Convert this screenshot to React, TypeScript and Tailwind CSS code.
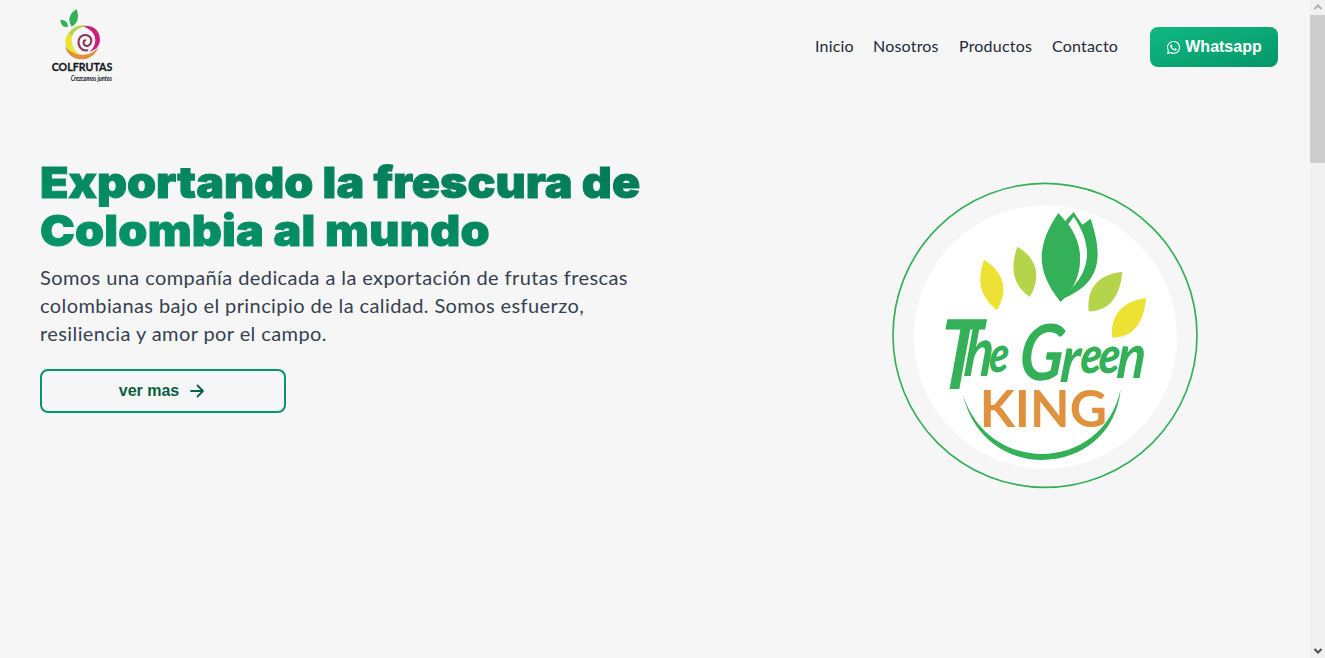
import { FaWhatsapp } from "react-icons/fa";

const links = [
  { label: "Inicio", box: "w-[38px]" },
  { label: "Nosotros", box: "w-[66px]" },
  { label: "Productos", box: "w-[73px]" },
  { label: "Contacto", box: "w-[66px]" },
];

function BrandLogo() {
  return (
    <svg viewBox="0 0 270 285" className="h-[95px] w-[90px] shrink-0 self-start" aria-label="Colfrutas">
      <path d="M110 28C86 40 83 62 95 80C114 71 118 51 110 28Z" fill="#33b058" />
      <path d="M61 59C63 76 70 83 84 80C83 65 76 60 61 59Z" fill="#33b058" />
      <path d="M82 110C90 84 117 69 150 79C124 79 106 87 98 106C94 113 86 115 82 110Z" fill="#b6d44b" />
      <path d="M80 106C68 137 84 161 120 164C103 152 90 135 97 104Z" fill="#ece233" />
      <path d="M75 138C86 190 158 192 176 140C151 173 100 172 75 138Z" fill="#e0913d" />
      <path d="M130 80C156 72 180 90 180 119C179 140 166 149 149 155C176 132 172 92 130 80Z" fill="#c9207c" />
      <path
        d="M142 151C124 154 113 137 116 122C119 105 139 100 150 111C159 121 151 139 139 138C129 136 128 123 136 121"
        fill="none"
        stroke="#8c3658"
        strokeWidth="6"
        strokeLinecap="round"
      />
      <text x="35" y="214" textLength="182" lengthAdjust="spacingAndGlyphs" fontFamily="Lato, sans-serif" fontSize="35" fontWeight="700" fill="#15151d" stroke="#15151d" strokeWidth="0.8">
        COLFRUTAS
      </text>
      <text x="92" y="243" textLength="124" lengthAdjust="spacingAndGlyphs" fontFamily="Lato, sans-serif" fontSize="24" fontStyle="italic" fontWeight="700" fill="#15151d">
        Crezcamos juntos
      </text>
    </svg>
  );
}

function GreenKingLogo() {
  return (
    <svg viewBox="0 0 960 960" className="size-80" aria-label="The Green King">
      <circle cx="480" cy="481" r="456" fill="none" stroke="#33b058" strokeWidth="5" />
      <circle cx="481" cy="486" r="395" fill="#fff" />
      <path d="M541 137L566 111L592 149L617 131C652 238 653 319 541 368L526 380Z" fill="#33b058" />
      <path d="M550 148L566 125C623 208 623 289 541 357C596 286 600 220 550 148Z" fill="#fff" />
      <path d="M520 114C458 205 447 283 526 380C606 309 605 203 520 114Z" fill="#33b058" />
      <path d="M297 254C278 312 279 360 336 405C369 350 362 294 297 254Z" fill="#ece233" />
      <path d="M397 215C377 274 378 325 434 366C467 312 462 253 397 215Z" fill="#b6d44b" />
      <path d="M712 291C640 297 604 340 611 409C671 409 705 367 712 291Z" fill="#b6d44b" />
      <path d="M783 369C711 378 674 423 682 488C742 488 777 446 783 369Z" fill="#ece233" />
      <path
        d="M234 659C262 785 365 855 470 855C590 855 695 775 707 643C680 768 580 837 470 837C370 837 270 775 234 659Z"
        fill="#33b058"
      />
      <g fontFamily="Lato, sans-serif" fontWeight="700" fontStyle="italic" fill="#33b058">
        <text transform="translate(154 642) skewX(-5) scale(0.78 1)" fontSize="290">
          <tspan>T</tspan>
          <tspan x="98" y="-40" fontSize="206">h</tspan>
          <tspan x="194" y="-50" fontSize="152" fontWeight="900">e</tspan>
        </text>
        <text transform="translate(398 614) skewX(-5) scale(0.85 1)" fontSize="232">
          <tspan>G</tspan>
          <tspan x="148" y="8" fontSize="196">r</tspan>
          <tspan x="216" y="-20" fontSize="152" fontWeight="900">e</tspan>
          <tspan x="281" y="-20" fontSize="152" fontWeight="900">e</tspan>
          <tspan x="346" y="-4" fontSize="186">n</tspan>
        </text>
      </g>
      <text x="284" y="755" textLength="382" lengthAdjust="spacingAndGlyphs" fontFamily="Lato, sans-serif" fontSize="153" fontWeight="700" fill="#e0913d">
        KING
      </text>
    </svg>
  );
}

function Scrollbar() {
  return (
    <div className="flex w-[15px] shrink-0 flex-col bg-[#f1f1f1]">
      <svg viewBox="0 0 15 15" className="size-[15px]">
        <path d="M4.5 9L8 5.5L11.5 9" fill="none" stroke="#b0b0b4" strokeWidth="2" />
      </svg>
      <div className="h-[148px] bg-[#cdcdcd]" />
      <svg viewBox="0 0 15 15" className="mt-auto size-[15px]">
        <path d="M4.5 6L8 9.5L11.5 6" fill="none" stroke="#504b50" strokeWidth="2" />
      </svg>
    </div>
  );
}

export default function App() {
  return (
    <div className="flex h-[658px] w-full overflow-hidden bg-[#f6f6f6] font-['Lato',sans-serif]">
      <div className="flex min-w-0 flex-1 flex-col pr-8 pl-10">
        <header className="flex h-[94px] items-center justify-between">
          <BrandLogo />
          <div className="flex items-center gap-8">
            <nav className="flex gap-5 pb-0.5 text-base tracking-[0.2px] text-[#1f2937]">
              {links.map((link) => (
                <a key={link.label} href="#" className={`${link.box} whitespace-nowrap`}>
                  {link.label}
                </a>
              ))}
            </nav>
            <button className="flex h-10 w-32 items-center justify-center gap-1 rounded-lg bg-linear-to-br/srgb from-[#10b981] to-[#059669] font-['Liberation_Sans',sans-serif] text-base font-bold text-white">
              <FaWhatsapp size={15} />
              Whatsapp
            </button>
          </div>
        </header>
        <main className="flex justify-between">
          <section className="w-[620px] pt-16">
            <h1 className="w-fit origin-left scale-x-[1.083] bg-linear-to-tr/srgb from-[#059669] to-[#047857] bg-clip-text font-['Inter',sans-serif] text-[43px] leading-[48px] font-black whitespace-nowrap text-transparent [-webkit-text-stroke:1px_transparent]">
              <span className="block">Exportando la frescura de</span>
              <span className="block tracking-[0.2px]">Colombia al mundo</span>
            </h1>
            <p className="mt-[9px] text-xl leading-7 tracking-[0.41px] whitespace-nowrap text-[#374151]">
              <span className="block w-fit">Somos una compañía dedicada a la exportación de frutas frescas</span>
              <span className="block w-fit">colombianas bajo el principio de la calidad. Somos esfuerzo,</span>
              <span className="block w-fit">resiliencia y amor por el campo.</span>
            </p>
            <button className="mt-[22px] flex h-11 w-[246px] items-center justify-center gap-2 rounded-lg border-2 border-[#059669] font-['Liberation_Sans',sans-serif] text-base font-bold text-[#065f46]">
              ver mas
              <svg viewBox="0 0 20 20" className="size-5" fill="none" stroke="currentColor" strokeWidth="1.8" strokeLinecap="round" strokeLinejoin="round">
                <path d="M4 10H16M10.5 4.5L16 10L10.5 15.5" />
              </svg>
            </button>
          </section>
          <div className="mt-[81px] mr-[73px]">
            <GreenKingLogo />
          </div>
        </main>
      </div>
      <Scrollbar />
    </div>
  );
}
